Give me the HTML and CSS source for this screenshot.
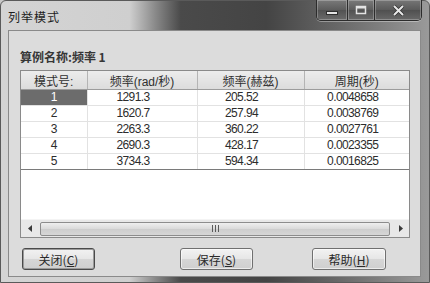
FILE: index.html
```html
<!DOCTYPE html>
<html lang="zh-CN">
<head>
  <meta charset="UTF-8">
  <meta name="viewport" content="width=device-width, initial-scale=1.0">
  <title>列举模式</title>
  <link rel="stylesheet" href="styles.css">
</head>
<body>

  <div class="window">
    <div class="titlebar">
      <span class="title">列举模式</span>
      <div class="caption-buttons">
        <span class="cap-btn cap-min">
          <svg width="12" height="4" viewBox="0 0 12 4"><rect x="0.5" y="0.5" width="11" height="3" fill="#e4e4e4" stroke="#2e2e2e" stroke-width="1"/></svg>
        </span>
        <span class="cap-btn cap-max">
          <svg width="12" height="10" viewBox="0 0 12 10"><rect x="1.5" y="1.5" width="9" height="7" fill="none" stroke="#e4e4e4" stroke-width="1.5"/><rect x="1.5" y="1.5" width="9" height="2" fill="#e4e4e4"/></svg>
        </span>
        <span class="cap-btn cap-close">
          <svg width="13" height="11" viewBox="0 0 13 11"><path d="M2 1 L11 10 M11 1 L2 10" stroke="#2e2e2e" stroke-width="3.4"/><path d="M2 1 L11 10 M11 1 L2 10" stroke="#e8e8e8" stroke-width="2"/></svg>
        </span>
      </div>
    </div>

    <div class="client">
      <div class="case-label">算例名称:频率 1</div>

      <div class="listview">
        <table class="grid">
          <colgroup>
            <col class="col-mode">
            <col class="col-rad">
            <col class="col-hz">
            <col class="col-period">
          </colgroup>
          <thead>
            <tr>
              <th>模式号:</th>
              <th>频率(rad/秒)</th>
              <th>频率(赫兹)</th>
              <th>周期(秒)</th>
            </tr>
          </thead>
          <tbody>
            <tr>
              <td class="selected">1</td>
              <td class="shift">1291.3</td>
              <td class="shift">205.52</td>
              <td class="shift-sm">0.0048658</td>
            </tr>
            <tr>
              <td>2</td>
              <td class="shift">1620.7</td>
              <td class="shift">257.94</td>
              <td class="shift-sm">0.0038769</td>
            </tr>
            <tr>
              <td>3</td>
              <td class="shift">2263.3</td>
              <td class="shift">360.22</td>
              <td class="shift-sm">0.0027761</td>
            </tr>
            <tr>
              <td>4</td>
              <td class="shift">2690.3</td>
              <td class="shift">428.17</td>
              <td class="shift-sm">0.0023355</td>
            </tr>
            <tr class="last">
              <td>5</td>
              <td class="shift">3734.3</td>
              <td class="shift">594.34</td>
              <td class="shift-sm">0.0016825</td>
            </tr>
          </tbody>
        </table>

        <div class="list-empty"></div>

        <div class="hscroll">
          <span class="arrow">
            <svg width="4" height="7" viewBox="0 0 4 7"><path d="M4 0 L0 3.5 L4 7 Z" fill="#3a3a3a"/></svg>
          </span>
          <div class="thumb">
            <svg width="7" height="7" viewBox="0 0 7 7"><path d="M0.5 0 V7 M3.5 0 V7 M6.5 0 V7" stroke="#5a5a5a" stroke-width="1"/></svg>
          </div>
          <span class="arrow">
            <svg width="4" height="7" viewBox="0 0 4 7"><path d="M0 0 L4 3.5 L0 7 Z" fill="#3a3a3a"/></svg>
          </span>
        </div>
      </div>

      <div class="button-row">
        <button class="btn btn-default btn-close">关闭(<u>C</u>)</button>
        <button class="btn btn-save">保存(<u>S</u>)</button>
        <button class="btn btn-help">帮助(<u>H</u>)</button>
      </div>
    </div>
  </div>

</body>
</html>
```

FILE: styles.css
```css
:root {
  --client-bg: #dcdcdc;
  --text-color: #2c2c2c;
  --grid-line: #e2e2e2;
  --border-color: #8c8c8c;
  --selected-bg: #6c6c6c;
}

body {
  margin: 0;
  padding: 0;
  font-family: "Liberation Sans", "Noto Sans CJK SC", sans-serif;
  font-size: 12px;
  color: var(--text-color);
  background: #c8c8c8;
}

.window {
  width: 430px;
  height: 283px;
  box-sizing: border-box;
  display: flex;
  flex-direction: column;
  padding: 0 8px 5px 7px;
  border: 1px solid #5a5a5a;
  border-radius: 6px 6px 0 0;
  background: linear-gradient(to right, #d4d4d4 0%, #cfcfcf 30%, #8a8a8a 36%, #4a4a4a 42%, #444 62%, #666 78%, #9a9a9a 100%);
}

.titlebar {
  height: 29px;
  display: flex;
  justify-content: space-between;
  align-items: flex-start;
  flex: 0 0 auto;
}

.title {
  padding-top: 7px;
  font-family: "Noto Sans CJK SC", sans-serif;
  font-size: 12px;
  letter-spacing: 1px;
  color: #1e1e1e;
}

.caption-buttons {
  display: flex;
  height: 20px;
  margin-top: -1px;
  margin-right: -1px;
  border: 1px solid #2c2c2c;
  border-top: none;
  border-radius: 0 0 5px 5px;
  overflow: hidden;
  box-shadow: 0 1px 0 rgba(255, 255, 255, 0.35);
}

.cap-btn {
  display: flex;
  align-items: center;
  justify-content: center;
  background: linear-gradient(#7a7a7a, #5c5c5c 50%, #525252 51%, #6a6a6a);
  box-shadow: inset 0 0 0 1px rgba(255, 255, 255, 0.25);
}

.cap-min {
  width: 31px;
  border-right: 1px solid #2c2c2c;
  padding-top: 5px;
  box-sizing: border-box;
}

.cap-max {
  width: 26px;
  border-right: 1px solid #2c2c2c;
}

.cap-close {
  width: 46px;
  background: linear-gradient(#767676, #5a5a5a 50%, #505050 51%, #686868);
}

.client {
  flex: 1;
  display: flex;
  flex-direction: column;
  padding: 0 10px 0 11px;
  border: 1px solid #8a8a8a;
  background: var(--client-bg);
}

.case-label {
  margin-top: 18px;
  height: 16px;
  line-height: 16px;
  font-weight: bold;
  font-family: "Noto Sans CJK SC", sans-serif;
  color: #363636;
}

.listview {
  margin-top: 5px;
  width: 390px;
  height: 168px;
  box-sizing: border-box;
  display: flex;
  flex-direction: column;
  border: 1px solid #8a8a8a;
  background: #fff;
}

.grid {
  width: 388px;
  border-collapse: collapse;
  table-layout: fixed;
}

.col-mode { width: 66px; }
.col-rad { width: 110px; }
.col-hz { width: 107px; }
.col-period { width: 105px; }

.grid th {
  height: 18px;
  padding: 0;
  font-weight: normal;
  text-align: center;
  color: #303030;
  background: linear-gradient(#ececec, #dcdcdc);
  border-right: 1px solid #b4b4b4;
  border-bottom: 1px solid #9c9c9c;
}

.grid td {
  height: 15px;
  padding: 0;
  line-height: 15px;
  text-align: center;
  letter-spacing: -0.6px;
  border-right: 1px solid var(--grid-line);
  border-bottom: 1px solid var(--grid-line);
}

.grid th:last-child,
.grid td:last-child {
  border-right: none;
}

.grid .last td {
  border-bottom: 1px solid #7a7a7a;
}

.grid td.selected {
  background: var(--selected-bg);
  color: #fff;
}

.grid td.shift {
  padding-right: 18px;
}

.grid td.shift-sm {
  padding-right: 8px;
}

.list-empty {
  flex: 1;
}

.hscroll {
  height: 17px;
  display: flex;
  align-items: center;
  background: #e8e8e8;
  border-top: 1px solid #f4f4f4;
}

.hscroll .arrow {
  width: 17px;
  display: flex;
  justify-content: center;
}

.hscroll .thumb {
  flex: 1;
  height: 14px;
  margin: 0 2px;
  display: flex;
  align-items: center;
  justify-content: center;
  border: 1px solid #8c8c8c;
  border-radius: 2px;
  background: linear-gradient(#efefef, #dadada 50%, #cdcdcd 51%, #d6d6d6);
  box-sizing: border-box;
}

.button-row {
  display: flex;
  margin-top: 10px;
  padding-left: 2px;
}

.btn {
  height: 22px;
  padding: 0;
  font-family: "Noto Sans CJK SC", sans-serif;
  font-size: 12px;
  color: #2a2a2a;
  border: 1px solid #707070;
  border-radius: 3px;
  background: linear-gradient(#f2f2f2, #e6e6e6 50%, #d6d6d6 51%, #cfcfcf);
  box-shadow: inset 0 0 0 1px rgba(255, 255, 255, 0.6);
}

.btn u {
  text-decoration: underline;
}

.btn-default {
  border-color: #4a4a4a;
  box-shadow: inset 0 0 0 1px #9a9a9a;
}

.btn-close { width: 73px; }
.btn-save { width: 73px; margin-left: 85px; }
.btn-help { width: 74px; margin-left: 59px; }
```
